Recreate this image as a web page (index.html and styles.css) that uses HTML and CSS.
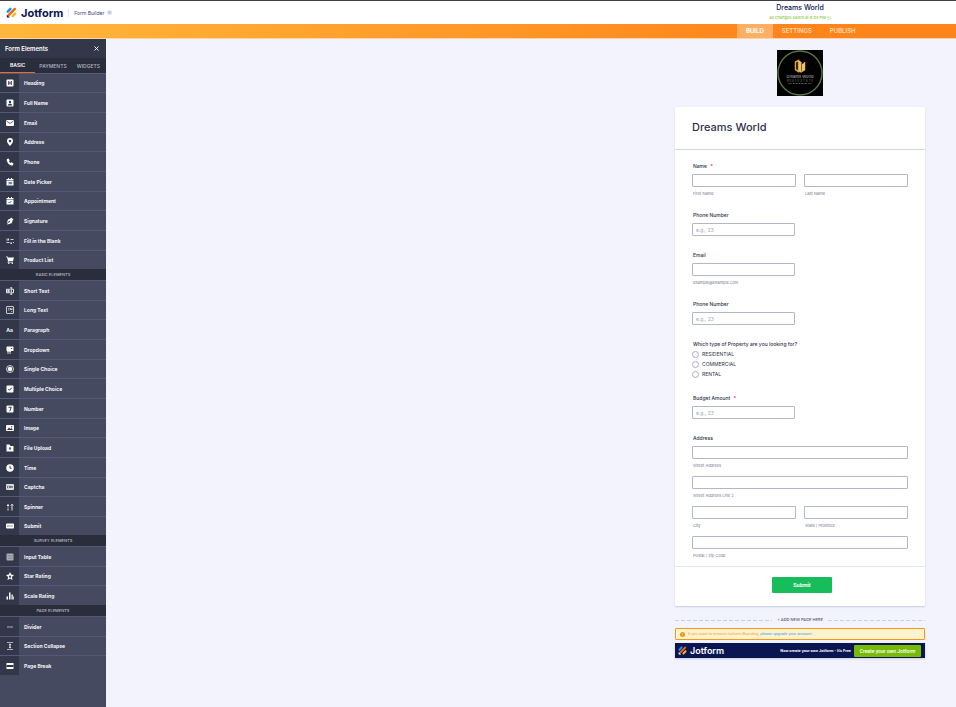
FILE: index.html
```html
<!DOCTYPE html>
<html lang="en">
<head>
<meta charset="utf-8">
<title>Form Builder - Dreams World</title>
<link rel="stylesheet" href="styles.css">
</head>
<body>
<header class="topbar">
  <a class="brand" href="#">
    <svg class="brand-mark" viewBox="0 0 20 20" aria-hidden="true"><g fill="none" stroke-width="4.4" stroke-linecap="round"><path stroke="#0099ff" d="M3.2 8.4 8 3.4"/><path stroke="#ff6100" d="M5.4 14.2 16 3.6"/><path stroke="#ffb629" d="M12 16.6l4.8-4.8"/></g><path fill="#0a1551" d="M1.5 13.5v4c0 1 .6 1.6 1.6 1.6h4z"/></svg>
    <span>Jotform</span>
  </a>
  <button class="mode" type="button">Form Builder <i class="mode-dot"></i></button>
  <div class="doc">
    <h1 class="doc-title">Dreams World</h1>
    <p class="doc-status">All changes saved at 6:03 PM <svg viewBox="0 0 12 12" aria-hidden="true"><path fill="none" stroke="#8fc73e" stroke-width="1.5" d="M2 2v3h3M2.500 4.500a4.200 4.200 0 1 1 0 4"/></svg></p>
  </div>
</header>
<nav class="stages">
  <div class="stages-list">
    <a class="stage stage-on" href="#">BUILD</a>
    <a class="stage" href="#">SETTINGS</a>
    <a class="stage" href="#">PUBLISH</a>
  </div>
</nav>
<div class="workspace">
  <aside class="panel">
    <div class="panel-head"><h2>Form Elements</h2><button type="button" class="close" aria-label="Close"><svg viewBox="0 0 10 10"><path stroke="#fff" stroke-width="1.800" d="M1 1l8 8M9 1L1 9"/></svg></button></div>
    <div class="tabs"><button type="button" class="tab tab-on">BASIC</button><button type="button" class="tab">PAYMENTS</button><button type="button" class="tab">WIDGETS</button></div>
    <ul class="items items-main">
      <li><span class="ico"><svg viewBox="0 0 16 16"><rect x="1" y="1" width="14" height="14" rx="2" fill="#fff"/><path stroke="#33374a" stroke-width="2" d="M5.500 4v8M10.500 4v8M5.500 8h5"/></svg></span>Heading</li>
      <li><span class="ico"><svg viewBox="0 0 16 16"><rect x="1" y="1" width="14" height="14" rx="2" fill="#fff"/><circle cx="8" cy="6" r="2.400" fill="#33374a"/><path fill="#33374a" d="M3.500 13c0-5 9-5 9 0z"/></svg></span>Full Name</li>
      <li><span class="ico"><svg viewBox="0 0 16 16"><rect x="0" y="2" width="16" height="12" rx="2" fill="#fff"/><path fill="none" stroke="#33374a" stroke-width="1.500" d="M1 4l7 5 7-5"/></svg></span>Email</li>
      <li><span class="ico"><svg viewBox="0 0 16 16"><path fill="#fff" fill-rule="evenodd" d="M8 0a6 6 0 0 0-6 6c0 4 6 10 6 10s6-6 6-10a6 6 0 0 0-6-6zm0 3.500a2.500 2.500 0 1 1 0 5 2.500 2.500 0 0 1 0-5z"/></svg></span>Address</li>
      <li><span class="ico"><svg viewBox="0 0 16 16"><path fill="#fff" d="M2 2l3-1 2.500 4-1.700 1.700c.7 1.600 1.900 2.800 3.500 3.500L11 8.500l4 2.500-1 3c-1 2-5.500 1-8.500-2S0 4 2 2z"/></svg></span>Phone</li>
      <li><span class="ico"><svg viewBox="0 0 16 16"><path fill="#fff" d="M1 2h3V0h2v2h4V0h2v2h3v3H1zM1 6h14v9H1z"/><path fill="none" stroke="#33374a" stroke-width="1.200" d="M4.500 8.500H7V12H4.500M9 8.500h2.500V12H9z"/></svg></span>Date Picker</li>
      <li><span class="ico"><svg viewBox="0 0 16 16"><path fill="#fff" d="M1 2h3V0h2v2h4V0h2v2h3v3H1zM1 6h14v9H1z"/><path fill="none" stroke="#33374a" stroke-width="1.600" d="M5 10l2 2 4-4"/></svg></span>Appointment</li>
      <li><span class="ico"><svg viewBox="0 0 16 16"><path fill="#fff" d="M10 1l5 4-2 2-1 5-9 3-.8-.8L6 10.500a1.500 1.500 0 1 0-1-1L1.500 13 4 5l5-2z"/></svg></span>Signature</li>
      <li><span class="ico"><svg viewBox="0 0 16 16"><path fill="none" stroke="#fff" stroke-width="1.600" d="M1 6h5M1 4h2M5 3v3M9 5h6M1 11h6M10 10v3M9 13h3M14 11h2"/></svg></span>Fill in the Blank</li>
      <li><span class="ico"><svg viewBox="0 0 16 16"><path fill="#fff" d="M0 1h3l1 2h12l-2 7H5.500L5 11.500h9V13H3l1-3-2-7.500H0z"/><circle cx="5.500" cy="14.500" r="1.500" fill="#fff"/><circle cx="12.500" cy="14.500" r="1.500" fill="#fff"/></svg></span>Product List</li>
    </ul>
    <h3 class="group">BASIC ELEMENTS</h3>
    <ul class="items items-basic">
      <li><span class="ico"><svg viewBox="0 0 16 16"><path fill="none" stroke="#fff" stroke-width="1.800" d="M9 4.500H1v7h8M12 4.500h3v7h-3M10.500 2v12M8.500 1.500h4M8.500 14.500h4M3.500 9.500V7h3v2.500z"/></svg></span>Short Text</li>
      <li><span class="ico"><svg viewBox="0 0 16 16"><rect x="1" y="1" width="14" height="14" rx="1" fill="none" stroke="#fff" stroke-width="1.500"/><path stroke="#fff" stroke-width="1.300" d="M4 5h3M4 8h3M9 4v4M9 7h3M12 4v4M10 12.500l2.500-2.500"/></svg></span>Long Text</li>
      <li><span class="ico">Aa</span>Paragraph</li>
      <li><span class="ico"><svg viewBox="0 0 16 16"><rect x="1" y="1" width="14" height="9" rx="1" fill="#fff"/><path fill="#33374a" d="M9 4h4l-2 2.500z"/><path stroke="#fff" stroke-width="1.600" d="M2 11h8M2 14h8"/></svg></span>Dropdown</li>
      <li><span class="ico"><svg viewBox="0 0 16 16"><circle cx="8" cy="8" r="7" fill="none" stroke="#fff" stroke-width="1.500"/><circle cx="8" cy="8" r="4.500" fill="#fff"/></svg></span>Single Choice</li>
      <li><span class="ico"><svg viewBox="0 0 16 16"><rect x="1" y="1" width="14" height="14" rx="2" fill="#fff"/><path fill="none" stroke="#33374a" stroke-width="2" d="M4.500 8L7 10.500l4.500-5"/></svg></span>Multiple Choice</li>
      <li><span class="ico"><svg viewBox="0 0 16 16"><rect x="1" y="1" width="14" height="14" rx="2" fill="#fff"/><path fill="none" stroke="#33374a" stroke-width="2" d="M5 4.500h5.500L7.500 12.500"/></svg></span>Number</li>
      <li><span class="ico"><svg viewBox="0 0 16 16"><rect x="0" y="2" width="16" height="12" rx="2" fill="#fff"/><path fill="#33374a" d="M2 12l4-5 3 3 2-2 3 4z"/><circle cx="11.500" cy="5.500" r="1.300" fill="#33374a"/></svg></span>Image</li>
      <li><span class="ico"><svg viewBox="0 0 16 16"><path fill="#fff" d="M1 1h6l2 3h6v11H1z"/><path fill="#33374a" d="M8 6l3 3H9v3H7V9H5z"/></svg></span>File Upload</li>
      <li><span class="ico"><svg viewBox="0 0 16 16"><circle cx="8" cy="8" r="7.500" fill="#fff"/><path fill="none" stroke="#33374a" stroke-width="1.800" d="M8 3.500V8.500h3.500"/></svg></span>Time</li>
      <li><span class="ico"><svg viewBox="0 0 16 16"><rect x="0" y="2" width="16" height="12" rx="2" fill="#ddd"/><path fill="none" stroke="#33374a" stroke-width="1.200" d="M5 6H3v4h2M7 10V6h2v4M11 6l2 4M13 6l-2 4"/></svg></span>Captcha</li>
      <li><span class="ico"><svg viewBox="0 0 16 16"><path fill="none" stroke="#eee" stroke-width="2" d="M4 2v3M2 5h4M4 7v2M4 11v4M12 15V3M9.500 5L12 2.500 14.500 5"/></svg></span>Spinner</li>
      <li><span class="ico"><svg viewBox="0 0 16 16"><rect x="0" y="3" width="16" height="10" rx="2" fill="#fff"/><path stroke="#33374a" stroke-width="1.800" stroke-dasharray="1.500 .8" d="M2.500 8h11"/></svg></span>Submit</li>
    </ul>
    <h3 class="group">SURVEY ELEMENTS</h3>
    <ul class="items">
      <li><span class="ico"><svg viewBox="0 0 16 16"><rect x="1" y="1" width="14" height="14" rx="2" fill="#a9abb5"/><path stroke="#777b8a" d="M1 5h14M4 8h9M4 11h9"/></svg></span>Input Table</li>
      <li><span class="ico"><svg viewBox="0 0 16 16"><path fill="#fff" fill-rule="evenodd" d="M8 0l2.300 5.200L16 6l-4.200 3.900L13 16l-5-3-5 3 1.200-6.100L0 6l5.700-.8zM8 5.500L7 8l-2 .3 1.500 1.400L6.200 12 8 10.800 9.800 12l-.3-2.300L11 8.300 9 8z"/></svg></span>Star Rating</li>
      <li><span class="ico"><svg viewBox="0 0 16 16"><path fill="#fff" d="M1 9h3v6H1zM6 1h3v14H6zM11 5h2.500v10H11zM14.500 9H16v6h-1.500z"/></svg></span>Scale Rating</li>
    </ul>
    <h3 class="group">PAGE ELEMENTS</h3>
    <ul class="items">
      <li><span class="ico"><svg viewBox="0 0 16 16"><path stroke="#9698a4" stroke-width="2.500" d="M2 8h12"/></svg></span>Divider</li>
      <li><span class="ico"><svg viewBox="0 0 16 16"><path stroke="#aeb0ba" stroke-width="2" d="M2 1h12M2 15h12"/><path fill="#fff" d="M8 3l2.500 3H9v4h1.500L8 13l-2.500-3H7V6H5.500z"/></svg></span>Section Collapse</li>
      <li><span class="ico"><svg viewBox="0 0 16 16"><path fill="#fff" d="M1 2h14v4H1zM1 10h14v4H1zM0 7.500h2v1H0zM14 7.500h2v1h-2z"/></svg></span>Page Break</li>
    </ul>
  </aside>
  <main class="canvas">
    <svg class="logo" viewBox="0 0 46 46" role="img" aria-label="Dreams World logo">
      <rect width="46" height="46" fill="#000"/>
      <circle cx="23" cy="23" r="22" fill="none" stroke="#58763f" stroke-width="1.400"/>
      <g fill="none" stroke="#e0a243" stroke-width="1.500"><path d="M18.500 12v7.500l3 2V10.500zM27.500 12v7.500l-3 2"/></g><path fill="#f1c069" d="M22 10.500l2.500 1.500v11L22 21.500zM25 14l3-1.500V20l-3 2z"/>
      <text x="23" y="28" class="logo-name">Dreams World</text>
      <text x="23" y="31.500" class="logo-sub">R E A L  E S T A T E</text>
      <path stroke="#64644f" stroke-width=".6" d="M11 33.500h4M31 33.500h4"/><path stroke="#777" stroke-width=".8" stroke-dasharray="1 .5" d="M16 33.500h14"/>
    </svg>
    <form class="card">
      <div class="card-head"><h2>Dreams World</h2></div>
      <div class="fields">
        <fieldset class="field">
          <legend>Name <b>*</b></legend>
          <div class="pair">
            <div><input type="text" id="first"><label class="sub" for="first">First Name</label></div>
            <div><input type="text" id="last"><label class="sub" for="last">Last Name</label></div>
          </div>
        </fieldset>
        <div class="field short"><label class="title" for="phone1">Phone Number</label><input type="text" id="phone1" placeholder="e.g., 23"></div>
        <div class="field short"><label class="title" for="email">Email</label><input type="email" id="email"><span class="sub">example@example.com</span></div>
        <div class="field short"><label class="title" for="phone2">Phone Number</label><input type="text" id="phone2" placeholder="e.g., 23"></div>
        <fieldset class="field choices">
          <legend>Which type of Property are you looking for?</legend>
          <label><input type="radio" name="kind">RESIDENTIAL</label>
          <label><input type="radio" name="kind">COMMERCIAL</label>
          <label><input type="radio" name="kind">RENTAL</label>
        </fieldset>
        <div class="field short"><label class="title" for="budget">Budget Amount <b>*</b></label><input type="text" id="budget" placeholder="e.g., 23"></div>
        <fieldset class="field">
          <legend>Address</legend>
          <div class="lines">
            <div><input type="text" id="street"><label class="sub" for="street">Street Address</label></div>
            <div><input type="text" id="street2"><label class="sub" for="street2">Street Address Line 2</label></div>
            <div class="pair">
              <div><input type="text" id="city"><label class="sub" for="city">City</label></div>
              <div><input type="text" id="state"><label class="sub" for="state">State / Province</label></div>
            </div>
            <div><input type="text" id="zip"><label class="sub" for="zip">Postal / Zip Code</label></div>
          </div>
        </fieldset>
      </div>
      <div class="card-foot"><button type="button" class="submit">Submit</button></div>
    </form>
    <button type="button" class="add-page">+ ADD NEW PAGE HERE</button>
    <p class="notice"><svg viewBox="0 0 10 10" aria-hidden="true"><circle cx="5" cy="5" r="5" fill="#f6920a"/><path stroke="#fff3cf" stroke-width="1.200" d="M5 2v3.500M5 7v1"/></svg><span>If you want to remove Jotform Branding, <a href="#">please upgrade your account</a></span></p>
    <div class="banner">
      <a class="banner-brand" href="#"><svg class="banner-mark" viewBox="0 0 20 20" aria-hidden="true"><g fill="none" stroke-width="4.400" stroke-linecap="round"><path stroke="#0099ff" d="M3.200 8.400 8 3.400"/><path stroke="#ff6100" d="M5.400 14.200 16 3.600"/><path stroke="#ffb629" d="M12 16.600l4.800-4.800"/></g><path fill="#fff" d="M1.500 13.500v4c0 1 .6 1.600 1.600 1.600h4z"/></svg>Jotform</a>
      <span class="banner-text">Now create your own Jotform - It's Free</span>
      <button type="button" class="banner-cta">Create your own Jotform</button>
    </div>
  </main>
</div>
</body>
</html>
```
FILE: styles.css
```css
* { box-sizing: border-box; }
body {
  margin: 0;
  min-height: 100vh;
  display: flex;
  flex-direction: column;
  background: #f3f3fe;
  color: #2c3345;
  font: 5px/8px Inter, "Liberation Sans", sans-serif;
}
h1, h2, h3, p, ul { margin: 0; padding: 0; font-weight: inherit; font-size: inherit; }
ul { list-style: none; }
button, input { font: inherit; color: inherit; margin: 0; padding: 0; border: 0; background: none; }
a { color: inherit; text-decoration: none; }
svg { display: block; flex: none; }

.topbar {
  height: 24px;
  display: flex;
  align-items: center;
  padding: 0 31px 0 6px;
  background: #fff;
  border-top: 1px solid #453f4d;
}
.brand { display: flex; align-items: center; gap: 4px; color: #0a1551; font-size: 11px; line-height: 14px; font-weight: 700; }
.brand-mark { width: 11px; height: 11px; }
.mode { display: flex; align-items: center; gap: 3px; margin-left: 5px; padding-left: 5px; border-left: 1px solid #e3e5f1; color: #3e4677; }
.mode-dot { width: 5px; height: 5px; border-radius: 50%; background: #c8cbe0; border: 1px solid #dfe1ee; }
.doc { width: 250px; margin-left: auto; text-align: center; }
.doc-title { color: #0a1551; font-size: 7px; line-height: 10px; font-weight: 500; }
.doc-status { display: flex; justify-content: center; align-items: center; gap: 1px; color: #8fc73e; font-size: 4px; line-height: 10px; font-weight: 500; }
.doc-status svg { width: 4px; height: 4px; }

.stages { height: 15px; display: flex; justify-content: flex-end; padding-right: 31px; background: linear-gradient(90deg, #ffb73b, #ff8419 82%); border-bottom: 1px solid #ffd3a8; }
.stages-list { width: 188px; display: flex; }
.stage { display: flex; align-items: center; padding: 0 9px; color: #ffdcb9; font-size: 6px; font-weight: 600; }
.stage-on { background: #ffae62; color: #fff; font-weight: 700; }

.workspace { flex: 1; display: flex; }
.panel { width: 106px; flex: none; background: #454a60; color: #fff; }
.panel-head { height: 19px; padding: 0 7px 0 5px; display: flex; align-items: center; justify-content: space-between; background: #33374a; font-size: 6px; font-weight: 600; }
.close svg { width: 5px; height: 5px; }
.tabs { height: 15px; display: grid; grid-template-columns: 1fr 1fr 1fr; background: #2a2d3c; }
.tab { color: #b2b5c2; font-weight: 500; }
.tab-on { color: #fff; font-weight: 600; border-bottom: 1px solid #ef6a22; }
.items li { height: 20px; display: flex; align-items: center; gap: 5px; border-top: 1px solid #535a79; color: #f4f5f9; font-weight: 700; }
.items li:nth-child(3n+2) { height: 19px; }
.items-main li:nth-child(3n+2) { height: 20px; }
.items-main li:nth-child(3n+1), .items-basic li:last-child { height: 19px; }
.ico { width: 19px; align-self: stretch; display: flex; align-items: center; justify-content: center; background: #33374a; }
.ico svg { width: 8px; height: 8px; }
.group { height: 11px; background: #2a2d3c; color: #b8bac6; font-size: 4px; line-height: 11px; font-weight: 500; text-align: center; }

.canvas { width: 250px; margin: 0 31px 0 auto; padding: 11px 0 49px; }
.logo { width: 46px; height: 46px; margin: 0 auto 11px; }
.logo-name, .logo-sub { fill: #bbb; font-size: 4px; text-anchor: middle; }
.logo-sub { fill: #777; font-size: 3px; }
.card { background: #fff; border-radius: 1px; box-shadow: 0 1px 2px #c9cce0; }
.card-head { height: 43px; padding: 14px 17px; border-bottom: 1px solid #d3d6e4; }
.card-head h2 { font-size: 11px; line-height: 13px; font-weight: 500; }
.fields { display: flex; flex-direction: column; gap: 15px; padding: 12px 17px 8px; }
fieldset { min-width: 0; margin: 0; padding: 0; border: 0; }
legend, .title { display: block; height: 8px; margin: 0 0 4px 1px; padding: 0; font-weight: 500; }
legend b, .title b { margin-left: 2px; color: #f23a3c; }
.short input { width: 103px; }
.pair { display: grid; grid-template-columns: 1fr 1fr; gap: 8px; }
.lines { display: grid; gap: 8px; }
input[type="text"], input[type="email"] { display: block; height: 13px; padding: 0 3px; border: 1px solid #b3b6c8; border-radius: 1px; }
.pair input, .lines input { width: 100%; }
input::placeholder { color: #a3a6b5; opacity: 1; }
.sub { display: block; margin: 4px 0 -1px 1px; color: #74788f; font-size: 4px; line-height: 6px; }
.choices legend { margin-bottom: 1px; }
.choices label { height: 10px; display: flex; align-items: center; gap: 3px; }
.choices input { appearance: none; width: 7px; height: 7px; border: 1px solid #a9adc1; border-radius: 50%; }
.card-foot { display: flex; justify-content: center; padding: 10px 0 13px 4px; border-top: 1px solid #e3e5f5; }
.submit { width: 60px; height: 16px; border-radius: 1px; background: #18bd5b; color: #fff; font-weight: 700; }
.add-page { width: 100%; height: 8px; display: flex; align-items: center; gap: 5px; margin: 10px 0 4px; font-size: 4px; font-weight: 500; color: #555a7a; }
.add-page::before, .add-page::after { content: ""; flex: 1; height: 1px; background: repeating-linear-gradient(90deg, #c8cdee 0 4px, transparent 4px 6px); }
.notice { height: 12px; display: flex; align-items: center; gap: 3px; padding: 0 4px; border: 1px solid #f79a12; border-radius: 1px; background: #fff3cf; color: #f3a04c; font-family: Roboto, sans-serif; font-size: 4px; }
.notice svg { width: 5px; height: 5px; }
.notice a { color: #3a9fec; }
.banner { height: 15px; display: flex; align-items: center; margin-top: 3px; padding: 0 4px 0 3px; background: #0a1551; color: #fff; box-shadow: 0 1px 2px #c9cce0; }
.banner-brand { display: flex; align-items: center; gap: 3px; font-size: 9px; font-weight: 600; }
.banner-mark { width: 9px; height: 9px; }
.banner-text { margin-left: auto; font-family: Roboto, sans-serif; font-size: 4px; font-weight: 700; }
.banner-cta { width: 67px; height: 12px; margin-left: 3px; border-radius: 1px; background: #78bb07; font-family: Roboto, sans-serif; font-weight: 500; }
```
